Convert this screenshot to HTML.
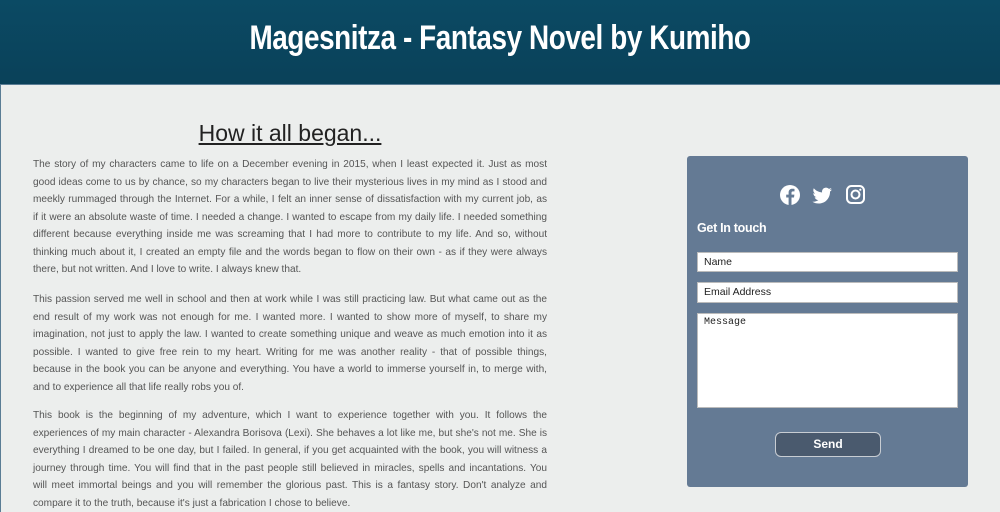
<!DOCTYPE html>
<html><head><meta charset="utf-8"><style>
*{margin:0;padding:0;box-sizing:border-box}
body{width:1000px;height:512px;overflow:hidden;background:#eceeed;font-family:"Liberation Sans",sans-serif;position:relative}
.hdr{position:absolute;left:0;top:0;width:1000px;height:85px;background:linear-gradient(#0b4a64,#0a4159);border-bottom:1px solid #5a7d95}
.hdr h1{position:absolute;left:0;width:1000px;top:19px;text-align:center;color:#fff;font-weight:bold;font-size:34px;transform:scaleX(0.82);letter-spacing:-0.5px}
.lb{position:absolute;left:0;top:85px;width:1px;height:427px;background:#5a7d95}
h2{position:absolute;left:90px;width:400px;top:120px;text-align:center;font-weight:normal;font-size:23px;color:#222;text-decoration:underline}
.txt{position:absolute;left:33px;width:514px;font-size:10.1px;color:#555;line-height:17.5px}
.txt span{display:block;height:17.5px;text-align:justify;text-align-last:justify;white-space:nowrap;overflow:visible}
.txt span.l{text-align-last:left}
.panel{position:absolute;left:687px;top:156px;width:281px;height:331px;background:#647a94;border-radius:3px}
.icons{position:absolute;top:184px;left:779px}
.git{position:absolute;left:697px;top:221px;color:#fff;font-size:12.5px;font-weight:bold;letter-spacing:-0.3px}
.in{position:absolute;left:697px;width:261px;background:#fff;border:1px solid #bbb;font-size:10.5px;color:#222;padding:3px 6px}
.btn{position:absolute;left:775px;top:432px;width:106px;height:25px;background:#4a5a6e;border:1px solid #c8cdd3;border-radius:6px;color:#fff;font-weight:bold;font-size:12px;text-align:center;line-height:23px}
</style></head><body>
<div class="hdr"><h1>Magesnitza - Fantasy Novel by Kumiho</h1></div>
<div class="lb"></div>
<h2>How it all began...</h2>
<div class="txt" style="top:156px">
<span>The story of my characters came to life on a December evening in 2015, when I least expected it. Just as most</span>
<span>good ideas come to us by chance, so my characters began to live their mysterious lives in my mind as I stood and</span>
<span>meekly rummaged through the Internet. For a while, I felt an inner sense of dissatisfaction with my current job, as</span>
<span>if it were an absolute waste of time. I needed a change. I wanted to escape from my daily life. I needed something</span>
<span>different because everything inside me was screaming that I had more to contribute to my life. And so, without</span>
<span>thinking much about it, I created an empty file and the words began to flow on their own - as if they were always</span>
<span class="l">there, but not written. And I love to write. I always knew that.</span>
</div>
<div class="txt" style="top:291px">
<span>This passion served me well in school and then at work while I was still practicing law. But what came out as the</span>
<span>end result of my work was not enough for me. I wanted more. I wanted to show more of myself, to share my</span>
<span>imagination, not just to apply the law. I wanted to create something unique and weave as much emotion into it as</span>
<span>possible. I wanted to give free rein to my heart. Writing for me was another reality - that of possible things,</span>
<span>because in the book you can be anyone and everything. You have a world to immerse yourself in, to merge with,</span>
<span class="l">and to experience all that life really robs you of.</span>
</div>
<div class="txt" style="top:407px">
<span>This book is the beginning of my adventure, which I want to experience together with you. It follows the</span>
<span>experiences of my main character - Alexandra Borisova (Lexi). She behaves a lot like me, but she's not me. She is</span>
<span>everything I dreamed to be one day, but I failed. In general, if you get acquainted with the book, you will witness a</span>
<span>journey through time. You will find that in the past people still believed in miracles, spells and incantations. You</span>
<span>will meet immortal beings and you will remember the glorious past. This is a fantasy story. Don't analyze and</span>
<span class="l">compare it to the truth, because it's just a fabrication I chose to believe.</span>
</div>
<div class="panel"></div>
<svg class="icons" width="90" height="22" viewBox="0 0 90 22">
<circle cx="11" cy="11" r="10" fill="#fff"/>
<path d="M12.5 21V13.5H15L15.4 10.6H12.5V8.8C12.5 8 12.8 7.4 14 7.4H15.5V4.9C15.2 4.9 14.3 4.8 13.3 4.8C11.1 4.8 9.6 6.1 9.6 8.5V10.6H7.2V13.5H9.6V21Z" fill="#647a94"/>
<path d="M53 5.5c-.7.3-1.5.5-2.3.6.8-.5 1.4-1.3 1.7-2.2-.8.5-1.6.8-2.5 1-.7-.8-1.8-1.3-2.9-1.3-2.2 0-4 1.8-4 4 0 .3 0 .6.1.9-3.3-.2-6.3-1.8-8.3-4.2-.3.6-.5 1.3-.5 2 0 1.4.7 2.6 1.8 3.3-.7 0-1.3-.2-1.8-.5 0 2 1.4 3.6 3.2 4-.6.2-1.2.2-1.8.1.5 1.6 2 2.8 3.7 2.8-1.4 1.1-3.1 1.7-5 1.7-.3 0-.6 0-1 0 1.8 1.1 3.9 1.8 6.2 1.8 7.4 0 11.4-6.1 11.4-11.4v-.5c.8-.6 1.5-1.3 2-2.1z" fill="#fff"/>
<rect x="68" y="2" width="17" height="17" rx="4.5" fill="none" stroke="#fff" stroke-width="2"/>
<circle cx="76.5" cy="10.5" r="4" fill="none" stroke="#fff" stroke-width="2"/>
<circle cx="81.3" cy="5.7" r="1.1" fill="#fff"/>
</svg>
<div class="git">Get In touch</div>
<div class="in" style="top:252px;height:20px">Name</div>
<div class="in" style="top:282px;height:21px">Email Address</div>
<div class="in" style="top:313px;height:95px;font-family:'Liberation Mono',monospace;font-size:10px">Message</div>
<div class="btn">Send</div>
</body></html>
